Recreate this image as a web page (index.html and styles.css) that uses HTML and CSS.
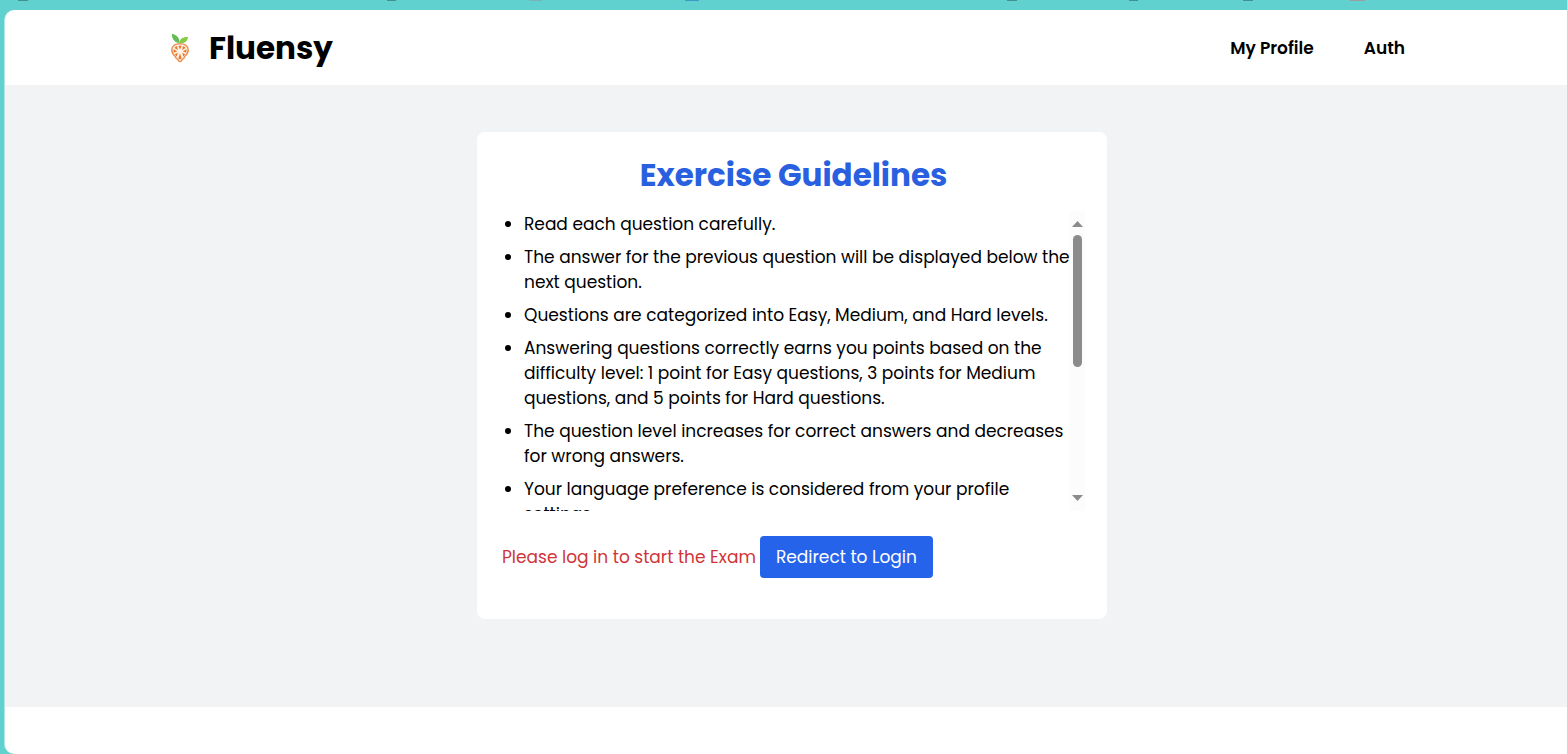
FILE: index.html
```
<!DOCTYPE html>
<html lang="en">
<head>
<meta charset="utf-8">
<meta name="viewport" content="width=device-width, initial-scale=1">
<title>Fluensy</title>
<link rel="stylesheet" href="styles.css">
</head>
<body>
<div class="tabstrip">
  <svg class="tab-marks" width="1567" height="1" aria-hidden="true">
    <g fill="#43918f"><path d="M18 0h10v1H18z"/><path d="M387 0h9v1h-9z"/><path d="M1007 0h10v1h-10z"/><path d="M1129 0h9v1h-9z"/><path d="M1243 0h10v1h-10z"/></g>
    <path d="M529 0h13v1h-13z" fill="#7bb5b3"/><path d="M685 0h14v1h-14z" fill="#3d9ac4"/><path d="M1350 0h15v1h-15z" fill="#9f9c99"/>
  </svg>
</div>
<div class="window">
  <header class="header">
    <a class="brand" href="#">
      <svg class="logo" viewBox="0 0 20 30" aria-hidden="true">
        <path d="M9.500 10C4 9.500 1.500 5 2 .7c4.500 1 8 4.300 7.500 9.300z" fill="#63bc55"/>
        <path d="M9.600 10c0-4.500 3.400-6 8.400-6-.4 4.200-3.500 6.600-8.400 6z" fill="#85cb45"/>
        <path d="M10 10.700c5 0 8.200 2.600 8.200 6.300 0 3.200-1.700 5-3.700 6.700-.2 2-1.200 2.300-2.300 2.500-.4 1.800-1.200 2.400-2.200 2.400s-1.800-.6-2.200-2.400c-1.100-.2-2.100-.5-2.300-2.500-2-1.700-3.700-3.500-3.700-6.700 0-3.700 3.200-6.300 8.200-6.300z" fill="#fff3e8" stroke="#eb9258" stroke-width="1.500"/>
        <g fill="#ea7a30">
          <path d="M10 16.500l-1.600-3.500q1.600-1 3.200 0z"/>
          <path d="M12.200 17l.7-4q2 .5 2.600 2z"/><path d="M12.800 18.200l3.500-1.900q.7 2-.2 3.400z"/><path d="M12.200 19.700l2.800 1.300q-.6 1.800-1.800 2.600z"/>
          <path d="M10 20.500l1.600 4.400q-1.600 2.600-3.200 0z"/>
          <path d="M7.800 19.700L5 21q.6 1.800 1.800 2.600z"/><path d="M7.200 18.200l-3.500-1.900q-.7 2 .2 3.400z"/><path d="M7.800 17l-.7-4q-2 .5-2.600 2z"/>
        </g>
      </svg>
      <span>Fluensy</span>
    </a>
    <nav class="nav"><a href="#">My Profile</a><a href="#">Auth</a></nav>
  </header>
  <main class="main">
    <section class="card">
      <h1 class="title">Exercise Guidelines</h1>
      <div class="scroller">
        <ul class="rules">
          <li>Read each question carefully.</li>
          <li>The answer for the previous question will be displayed below the next question.</li>
          <li>Questions are categorized into Easy, Medium, and Hard levels.</li>
          <li>Answering questions correctly earns you points based on the difficulty level: 1 point for Easy questions, 3 points for Medium questions, and 5 points for Hard questions.</li>
          <li>The question level increases for correct answers and decreases for wrong answers.</li>
          <li>Your language preference is considered from your profile settings.</li>
        </ul>
        <div class="scrollbar" aria-hidden="true">
          <svg width="11" height="6"><path d="M5.500 0L11 6H0z"/></svg>
          <div class="track"><div class="thumb"></div></div>
          <svg width="11" height="6"><path d="M0 0h11L5.500 6z"/></svg>
        </div>
      </div>
      <div class="actions">
        <p class="notice">Please log in to start the Exam</p>
        <button class="login" type="button">Redirect to Login</button>
      </div>
    </section>
  </main>
</div>
</body>
</html>
```
FILE: styles.css
```
* { box-sizing: border-box; }
body {
  display: flex;
  flex-direction: column;
  min-height: 100vh;
  margin: 0;
  overflow-x: hidden;
  background: #61d1d0;
  color: #000;
  font-family: Poppins, Inter, sans-serif;
  font-size: 17px;
  line-height: 25px;
}
a { color: inherit; text-decoration: none; }
.tabstrip { height: 10px; overflow: hidden; }
.tab-marks { display: block; }
.window {
  flex: 1;
  display: flex;
  flex-direction: column;
  margin: 0 -12px 0 4px;
  border-left: 1px solid #b0e6e5;
  border-radius: 10px 0 0 10px;
  background: #fff;
  overflow: hidden;
}
.header {
  display: flex;
  align-items: center;
  justify-content: space-between;
  min-height: 75px;
  padding: 1px 174px 0 165px;
}
.brand {
  display: flex;
  align-items: center;
  gap: 19px;
  font-size: 31px;
  line-height: 40px;
  font-weight: 700;
}
.logo { width: 20px; height: 30px; }
.nav { display: flex; gap: 50px; font-weight: 600; }
.main { padding: 47px 16px 88px; background: #f2f3f5; }
.card {
  max-width: 630px;
  margin: 0 auto;
  padding: 25px 22px 41px 25px;
  border-radius: 8px;
  background: #fff;
}
.title {
  margin: 0 0 17px;
  color: #2860e0;
  font-size: 31px;
  line-height: 37px;
  font-weight: 700;
  text-align: center;
}
.scroller { display: flex; height: 300px; }
.rules {
  flex: 1;
  margin: 0;
  padding: 1px 0 0 22px;
  overflow-y: auto;
  scrollbar-width: none;
}
.rules li { margin-bottom: 8px; }
.scrollbar {
  display: flex;
  flex-direction: column;
  align-items: center;
  gap: 8px;
  width: 15px;
  padding: 10px 0;
  background: #fcfcfc;
  fill: #8b8b8b;
}
.track { flex: 1; width: 9px; }
.thumb { height: 132px; border-radius: 5px; background: #8b8b8b; }
.actions { display: flex; align-items: center; gap: 4px; margin-top: 25px; }
.notice { margin: 0; color: #cf3438; }
.login {
  min-height: 42px;
  padding: 8px 16px;
  border: 0;
  border-radius: 4px;
  background: #2563eb;
  color: #fff;
  font: inherit;
}
```
